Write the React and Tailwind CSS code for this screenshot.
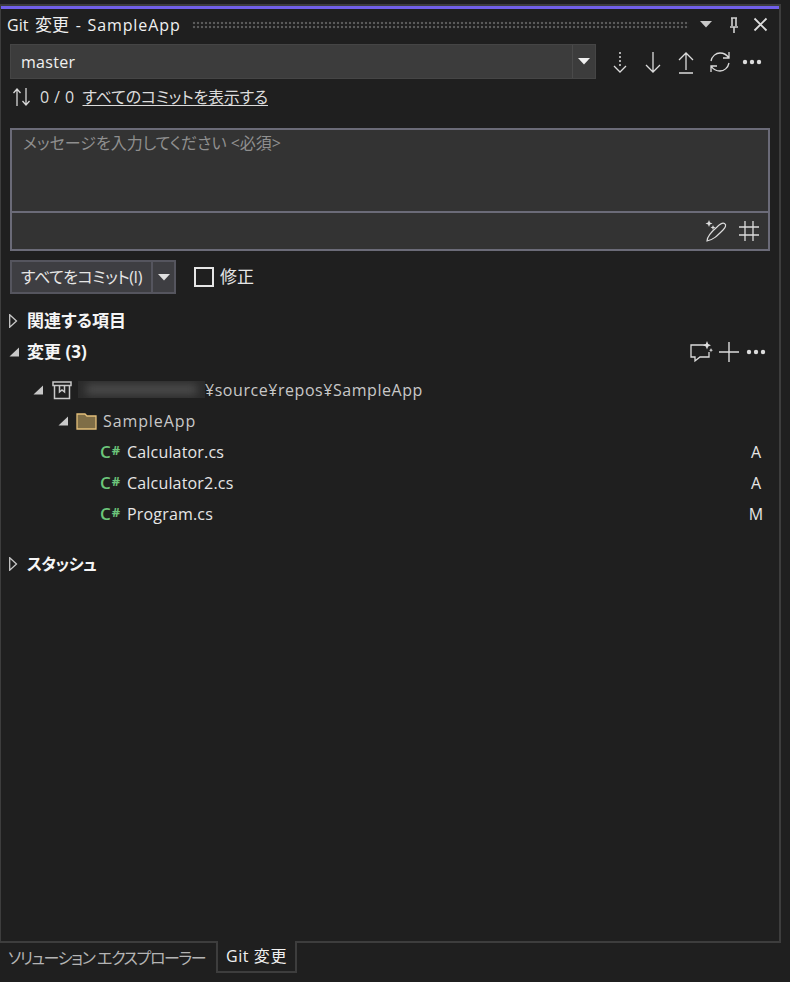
import React from 'react';

const FONT = '[font-family:"Open_Sans","Noto_Sans_CJK_JP",sans-serif] [font-feature-settings:"palt"]';

function Stroke({ w = 24, h = 24, children, className = '' }) {
  return (
    <svg width={w} height={h} viewBox={`0 0 ${w} ${h}`} fill="none" stroke="#dcdcdc" strokeWidth="1.3" className={`shrink-0 ${className}`}>
      {children}
    </svg>
  );
}

function Dots() {
  return (
    <Stroke w={20} h={6}>
      <circle cx="3" cy="3" r="2.2" fill="#dcdcdc" stroke="none" />
      <circle cx="10" cy="3" r="2.2" fill="#dcdcdc" stroke="none" />
      <circle cx="17" cy="3" r="2.2" fill="#dcdcdc" stroke="none" />
    </Stroke>
  );
}

function Caret({ open }) {
  if (open) {
    return (
      <svg width="10" height="10" viewBox="0 0 10 10" className="shrink-0">
        <path d="M10 0.5V9.5H0.5Z" fill="#c8c8c8" />
      </svg>
    );
  }
  return (
    <svg width="10" height="14" viewBox="0 0 10 14" fill="none" className="shrink-0">
      <path d="M0.7 0.8L7.5 7L0.7 13.2Z" stroke="#c8c8c8" strokeWidth="1.3" />
    </svg>
  );
}

function DownTri({ color = '#f0f0f0' }) {
  return (
    <svg width="12" height="7" viewBox="0 0 12 7" className="shrink-0">
      <path d="M0 0H12L6 6.5Z" fill={color} />
    </svg>
  );
}

function FileRow({ name, status }) {
  return (
    <div className="h-[31px] flex items-center pl-[99px] pr-[15px]">
      <span className="w-[27px] text-[#6cc57a] text-[17px] font-semibold leading-none flex items-center">
        C<span className="text-[13px] ml-[1px] -mt-[3px] font-bold">#</span>
      </span>
      <span className="text-[16px] text-[#e6e6e6] flex-1 tracking-[0.18px]">{name}</span>
      <span className="text-[16px] text-[#e6e6e6] w-[16px] text-center">{status}</span>
    </div>
  );
}

export default function App() {
  return (
    <div className={`w-[790px] h-[982px] bg-[#1f1f1f] flex flex-col overflow-hidden pt-[4px] ${FONT}`}>
      <div className="w-[781px] h-[939px] border-t-2 border-r-2 border-b-2 border-l border-[#3d3d3d] flex flex-col shrink-0">
        <div className="h-[3px] bg-[#7160e8] shrink-0" />

        {/* title bar */}
        <div className="h-[31px] flex items-center pl-[6px] pr-[9px] shrink-0">
          <span className="text-[16px] text-[#f0f0f0] whitespace-nowrap w-[185px] [word-spacing:2.5px]">
            Git <span className="text-[17px]">変更</span> - <span className="tracking-[0.9px]">SampleApp</span>
          </span>
          <div className="w-[497px] h-[8px] bg-[radial-gradient(circle,#5a5a5a_1.3px,transparent_1.6px)] bg-[length:4px_4px]" />
          <div className="ml-[11px]"><DownTri color="#c8c8c8" /></div>
          <Stroke w={16} h={18} className="ml-[14px]">
            <path d="M5 2H11M6 2V10M10 2V10M4 11H12M8 11V17" stroke="#d0d0d0" strokeWidth="1.6" />
          </Stroke>
          <Stroke w={15} h={15} className="ml-[11px]">
            <path d="M1.5 1.5L13.5 13.5M13.5 1.5L1.5 13.5" strokeWidth="1.8" />
          </Stroke>
        </div>

        {/* branch selector */}
        <div className="h-[35px] mt-[4px] flex items-center pl-[9px] shrink-0">
          <div className="w-[586px] h-[35px] bg-[#3c3c3c] border border-[#454545] flex">
            <div className="flex-1 flex items-center pl-[10px] text-[16px] text-[#f0f0f0] tracking-[0.3px]">master</div>
            <div className="w-[23px] border-l border-[#4a4a4a] flex items-center justify-center"><DownTri /></div>
          </div>
          <div className="flex items-center ml-[14px]">
            <Stroke w={20} h={24}>
              <path d="M10 2V16" strokeDasharray="2 2" strokeWidth="1.5" />
              <path d="M4 16L10 22L16 16" />
            </Stroke>
            <Stroke w={20} h={24} className="ml-[13px]">
              <path d="M10 2V22M3 15L10 22L17 15" />
            </Stroke>
            <Stroke w={20} h={24} className="ml-[13px]">
              <path d="M10 3V20M3 10L10 3L17 10M3 23H17" />
            </Stroke>
            <Stroke w={24} h={24} className="ml-[12px]">
              <path d="M3 11C4 6 8 3 12 3C16 3 19 5 21 8M21 2V8H15" />
              <path d="M21 13C20 18 16 21 12 21C8 21 5 19 3 16M3 22V16H9" />
            </Stroke>
            <div className="ml-[10px]"><Dots /></div>
          </div>
        </div>

        {/* outgoing / incoming */}
        <div className="h-[36px] flex items-center pl-[11px] shrink-0">
          <Stroke w={20} h={20}>
            <path d="M5 19V2M1.5 6L5 2L8.5 6M14 1V18M10.5 14L14 18L17.5 14" stroke="#d8d8d8" />
          </Stroke>
          <span className="text-[16px] text-[#dcdcdc] ml-[8px] whitespace-nowrap tracking-[0.4px]">0 / 0</span>
          <span className="text-[16px] text-[#dcdcdc] underline underline-offset-2 ml-[8px] whitespace-nowrap tracking-[-0.2px]">すべてのコミットを表示する</span>
        </div>

        {/* commit message */}
        <div className="mt-[13px] ml-[9px] w-[760px] h-[123px] border-2 border-[#6b6b78] bg-[#333333] flex flex-col shrink-0">
          <div className="h-[83px] border-b-2 border-[#6b6b78] pl-[11px] pt-[1px] text-[16px] text-[#8f8f8f] whitespace-nowrap">メッセージを入力してください &lt;必須&gt;</div>
          <div className="flex-1 flex items-center justify-end pr-[8px]">
            <Stroke w={24} h={24}>
              <path d="M3 22C3 18 6 14 13 8C15 6 18 3 20.5 4.5C23 6 21 9 19 11C13 17 9 21 3 22Z" strokeWidth="1.2" />
              <path d="M5 1L6 3.5L8.5 4.5L6 5.5L5 8L4 5.5L1.5 4.5L4 3.5Z" fill="#dcdcdc" stroke="none" />
              <path d="M9 6L9.7 7.8L11.5 8.5L9.7 9.2L9 11L8.3 9.2L6.5 8.5L8.3 7.8Z" fill="#dcdcdc" stroke="none" />
            </Stroke>
            <Stroke w={22} h={22} className="ml-[10px]">
              <path d="M7 1V21M15 1V21M1 7H21M1 15H21" />
            </Stroke>
          </div>
        </div>

        {/* commit button */}
        <div className="mt-[9px] ml-[9px] flex items-center shrink-0">
          <div className="w-[166px] h-[34px] border-2 border-[#55555e] bg-[#3e3e42] flex text-[#e6e6e6]">
            <div className="w-[139px] flex items-center justify-center text-[16px] whitespace-nowrap tracking-[-0.4px]">すべてをコミット(I)</div>
            <div className="flex-1 border-l-2 border-[#55555e] flex items-center justify-center"><DownTri color="#e0e0e0" /></div>
          </div>
          <div className="ml-[18px] w-[20px] h-[20px] border-2 border-[#e6e6e6]" />
          <span className="ml-[6px] text-[17px] text-[#e6e6e6]">修正</span>
        </div>

        {/* sections */}
        <div className="mt-[11px] h-[31px] flex items-center pl-[8px] shrink-0">
          <Caret />
          <span className="ml-[8px] text-[17px] font-bold text-[#f5f5f5]">関連する項目</span>
        </div>
        <div className="h-[31px] flex items-center pl-[8px] pr-[13px] shrink-0">
          <Caret open />
          <span className="ml-[8px] text-[17px] font-bold text-[#f5f5f5] flex-1">変更 (3)</span>
          <Stroke w={24} h={22}>
            <path d="M17 4H2V16H6L6 20L11 16H20V11" strokeWidth="1.3" />
            <path d="M18 0L19.2 3L22 4.2L19.2 5.4L18 8.4L16.8 5.4L14 4.2L16.8 3Z" fill="#dcdcdc" stroke="none" />
            <path d="M22 7L22.6 8.6L24 9.2L22.6 9.8L22 11.4L21.4 9.8L20 9.2L21.4 8.6Z" fill="#dcdcdc" stroke="none" />
          </Stroke>
          <Stroke w={20} h={20} className="ml-[6px]">
            <path d="M10 0V20M0 10H20" strokeWidth="1.4" />
          </Stroke>
          <div className="ml-[7px] w-[20px]"><Dots /></div>
        </div>

        {/* tree */}
        <div className="mt-[7px] h-[31px] flex items-center pl-[32px] shrink-0">
          <Caret open />
          <Stroke w={20} h={20} className="ml-[9px]">
            <path d="M1 2H19V5.5H1ZM2.5 5.5V18.5H17.5V5.5M7.5 5.5V12L10 10L12.5 12V5.5" stroke="#c8c8c8" strokeWidth="1.5" />
          </Stroke>
          <div className="ml-[6px] w-[127px] h-[17px] overflow-hidden relative bg-[#2b2b2b]">
            <div className="absolute inset-x-[8px] inset-y-[3px] bg-[#4a4a4a] blur-[4px]" />
          </div>
          <span className="text-[16px] text-[#c8c8c8] whitespace-nowrap tracking-[0.55px]">¥source¥repos¥SampleApp</span>
        </div>
        <div className="h-[31px] flex items-center pl-[57px] shrink-0">
          <Caret open />
          <svg width="21" height="18" viewBox="0 0 21 18" className="ml-[8px] shrink-0">
            <path d="M1 2H9L11 4H20V17H1Z" fill="#7f6d46" stroke="#e4bf7a" strokeWidth="1.3" />
          </svg>
          <span className="ml-[6px] text-[16px] text-[#c8c8c8] tracking-[0.9px]">SampleApp</span>
        </div>
        <FileRow name="Calculator.cs" status="A" />
        <FileRow name="Calculator2.cs" status="A" />
        <FileRow name="Program.cs" status="M" />

        <div className="mt-[19px] h-[31px] flex items-center pl-[8px] shrink-0">
          <Caret />
          <span className="ml-[8px] text-[16px] font-bold text-[#f5f5f5] tracking-[-0.5px]">スタッシュ</span>
        </div>
      </div>

      {/* tabs */}
      <div className="flex h-[30px] shrink-0">
        <div className="w-[216px] flex items-center pl-[8px] text-[16px] text-[#b4b4b4] whitespace-nowrap tracking-[-1.4px]">ソリューション エクスプローラー</div>
        <div className="w-[81px] border-2 border-t-0 border-[#3d3d3d] bg-[#1f1f1f] -mt-[2px] relative flex items-center justify-center text-[16px] text-[#f0f0f0] whitespace-nowrap tracking-[0.6px]">Git 変更</div>
      </div>
    </div>
  );
}
